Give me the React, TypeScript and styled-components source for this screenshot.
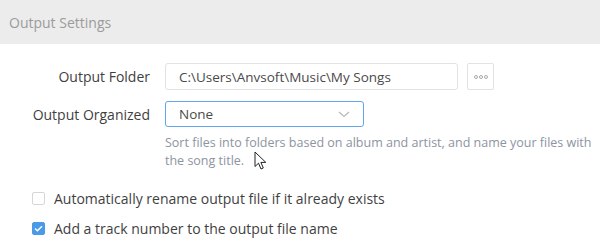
import React, { useState } from "react";
import styled, { createGlobalStyle } from "styled-components";

const GlobalStyle = createGlobalStyle`
  html, body {
    margin: 0;
    padding: 0;
    background: #ffffff;
  }
  body {
    font-family: "Open Sans", "Noto Sans", sans-serif;
    width: 600px;
    height: 252px;
    overflow: hidden;
  }
`;

const Page = styled.div`
  position: relative;
  width: 600px;
  height: 252px;
  background: #fff;
`;

const Header = styled.div`
  height: 44px;
  display: flex;
  align-items: center;
  padding-left: 9px;
  background: #ececec;
  color: #9b9b9b;
  font-size: 14px;
`;

const Form = styled.div`
  display: flex;
  flex-direction: column;
  padding-top: 19px;
`;

const Row = styled.div<{ $gap?: number }>`
  display: flex;
  align-items: center;
  margin-top: ${(p) => p.$gap || 0}px;
`;

const Label = styled.div`
  width: 165px;
  text-align: right;
  padding-right: 15px;
  box-sizing: border-box;
  font-size: 14px;
  color: #3f3f3f;
  flex-shrink: 0;
`;

const TextBox = styled.div`
  width: 293px;
  height: 27px;
  box-sizing: border-box;
  border: 1px solid #e2e2e2;
  border-radius: 3px;
  display: flex;
  align-items: center;
  padding-left: 13px;
  font-size: 13.5px;
  color: #4a4a4a;
`;

const MoreButton = styled.button`
  width: 27px;
  height: 27px;
  margin-left: 9px;
  box-sizing: border-box;
  border: 1px solid #e2e2e2;
  border-radius: 2px;
  background: #fff;
  display: flex;
  align-items: center;
  justify-content: center;
  padding: 0;
  cursor: pointer;
`;

const Select = styled.div`
  width: 199px;
  height: 26px;
  box-sizing: border-box;
  border: 1px solid #5ea7ec;
  border-radius: 3px;
  display: flex;
  align-items: center;
  justify-content: space-between;
  padding: 0 13px 0 13px;
  font-size: 13.5px;
  color: #4a4a4a;
`;

const Hint = styled.div`
  margin-left: 165px;
  margin-top: 7px;
  width: 432px;
  font-size: 12.5px;
  line-height: 18px;
  color: #8d94a1;
`;

const Checks = styled.div`
  display: flex;
  flex-direction: column;
  gap: 12px;
  margin-top: 19px;
  padding-left: 32px;
`;

const CheckRow = styled.label`
  display: flex;
  align-items: center;
  font-size: 14px;
  color: #3f3f3f;
  cursor: pointer;
  height: 18px;
`;

const Box = styled.span<{ $on: boolean }>`
  width: 13px;
  height: 13px;
  box-sizing: border-box;
  border-radius: 2px;
  border: 1px solid ${(p) => (p.$on ? "#4a9ae8" : "#d6d6d6")};
  background: ${(p) => (p.$on ? "#4a9ae8" : "#fff")};
  margin-right: 9px;
  display: flex;
  align-items: center;
  justify-content: center;
`;

const Cursor = styled.svg`
  position: absolute;
  left: 254px;
  top: 151px;
`;

const Check = ({ on, text, onToggle }: { on: boolean; text: string; onToggle: () => void }) => (
  <CheckRow onClick={onToggle}>
    <Box $on={on}>
      {on && (
        <svg width="9" height="7" viewBox="0 0 9 7">
          <path d="M1 3.6 L3.4 5.8 L8 1.2" fill="none" stroke="#fff" strokeWidth="1.4" />
        </svg>
      )}
    </Box>
    {text}
  </CheckRow>
);

export default function App() {
  const [rename, setRename] = useState(false);
  const [track, setTrack] = useState(true);

  return (
    <Page>
      <GlobalStyle />
      <Header>Output Settings</Header>
      <Form>
        <Row>
          <Label>Output Folder</Label>
          <TextBox>C:\Users\Anvsoft\Music\My Songs</TextBox>
          <MoreButton>
            <svg width="14" height="4" viewBox="0 0 14 4">
              <circle cx="2" cy="2" r="1.5" fill="none" stroke="#a0a0a0" strokeWidth="0.9" />
              <circle cx="7" cy="2" r="1.5" fill="none" stroke="#a0a0a0" strokeWidth="0.9" />
              <circle cx="12" cy="2" r="1.5" fill="none" stroke="#a0a0a0" strokeWidth="0.9" />
            </svg>
          </MoreButton>
        </Row>
        <Row $gap={11}>
          <Label>Output Organized</Label>
          <Select>
            None
            <svg width="12" height="7" viewBox="0 0 12 7">
              <path d="M1 1 L6 5.5 L11 1" fill="none" stroke="#b8b8b8" strokeWidth="1.2" />
            </svg>
          </Select>
        </Row>
        <Hint>
          Sort files into folders based on album and artist, and name your files with the song title.
        </Hint>
        <Checks>
          <Check on={rename} text="Automatically rename output file if it already exists" onToggle={() => setRename(!rename)} />
          <Check on={track} text="Add a track number to the output file name" onToggle={() => setTrack(!track)} />
        </Checks>
      </Form>
      <Cursor width="14" height="20" viewBox="0 0 14 20">
        <path
          d="M1 1 L1 15.5 L4.5 12.2 L7 18 L9.3 17 L6.9 11.4 L11.8 11.4 Z"
          fill="#fff"
          stroke="#222"
          strokeWidth="1"
          strokeLinejoin="round"
        />
      </Cursor>
    </Page>
  );
}
